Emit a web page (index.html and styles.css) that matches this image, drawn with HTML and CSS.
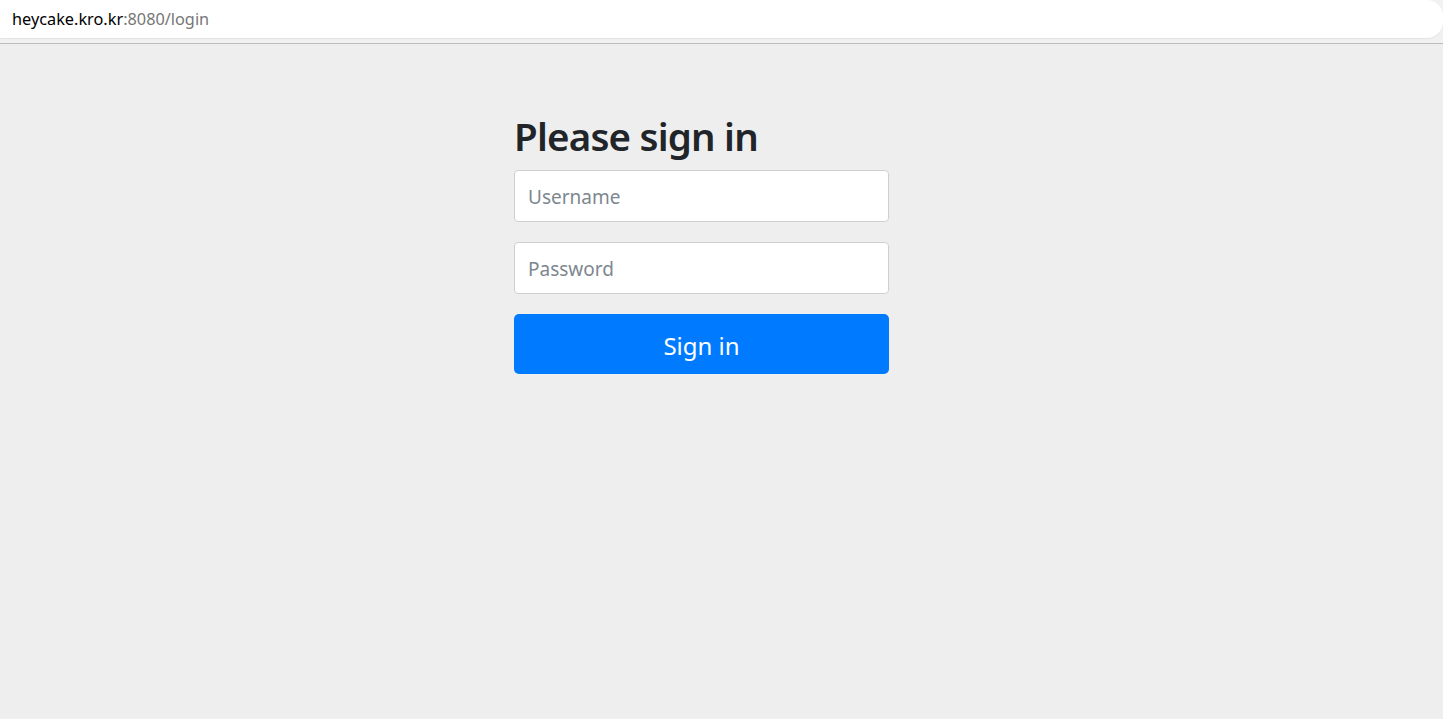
FILE: index.html
```html
<!DOCTYPE html>
<html lang="en">
<head>
  <meta charset="UTF-8" />
  <meta name="viewport" content="width=device-width, initial-scale=1.0" />
  <title>Please sign in</title>
  <link rel="stylesheet" href="styles.css">
</head>
<body>
  <div class="toolbar">
    <div class="omnibox">
      <span class="host">heycake.kro.kr</span><span class="path">:8080/login</span>
    </div>
  </div>

  <div class="page">
    <form class="form-signin" method="post" action="/login">
      <h2 class="form-signin-heading">Please sign in</h2>
      <input type="text" class="form-control" name="username" placeholder="Username" />
      <input type="password" class="form-control" name="password" placeholder="Password" />
      <button class="btn-primary" type="submit">Sign in</button>
    </form>
  </div>
</body>
</html>
```

FILE: styles.css
```css
body {
  margin: 0;
  font-family: 'Noto Sans', 'Open Sans', sans-serif;
  background-color: #eeeeee;
  color: #212529;
  min-height: 100vh;
}

.toolbar {
  height: 43px;
  background-color: #f1f1f1;
  border-bottom: 1px solid #bdbdbd;
}

.omnibox {
  height: 38px;
  background: #fff;
  border-radius: 0 16px 16px 0;
  box-shadow: 0 1px 1px rgba(0, 0, 0, 0.06);
  padding-left: 12px;
  display: flex;
  align-items: center;
  font-size: 16.3px;
}

.host {
  color: #000;
}

.path {
  color: #767676;
}

.page {
  padding-left: 514px;
  padding-top: 68px;
}

.form-signin {
  width: 375px;
  display: flex;
  flex-direction: column;
}

.form-signin-heading {
  margin: 0 0 10px;
  font-size: 38.5px;
  line-height: 48px;
  letter-spacing: -0.8px;
  font-weight: 600;
  color: #212529;
}

.form-control {
  box-sizing: border-box;
  height: 52px;
  margin: 0 0 20px;
  padding: 2px 13px 0;
  font-family: inherit;
  font-size: 19px;
  color: #495057;
  background: #fff;
  border: 1px solid #cfcfcf;
  border-radius: 4px;
  outline: none;
}

.form-control::placeholder {
  color: #7d8790;
}

.btn-primary {
  height: 60px;
  padding: 2px 0 0;
  font-family: inherit;
  font-size: 24px;
  color: #fff;
  background-color: #007bff;
  border: none;
  border-radius: 5px;
  cursor: pointer;
}
```
